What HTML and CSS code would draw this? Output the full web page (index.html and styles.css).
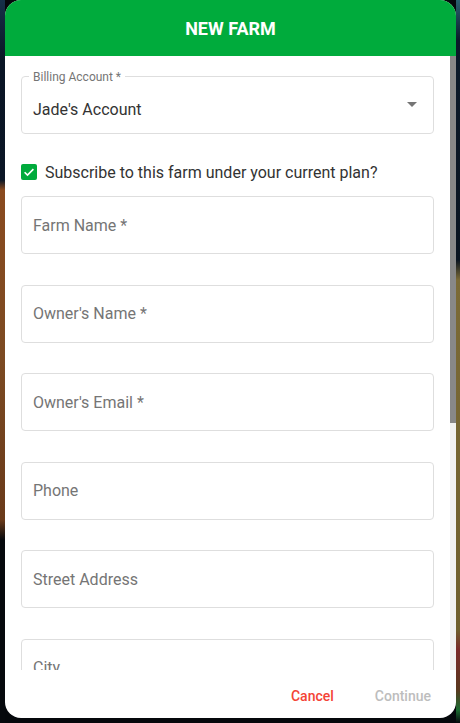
FILE: index.html
```html
<!DOCTYPE html>
<html>
<head>
    <title>New Farm</title>
    <link rel="stylesheet" href="styles.css">
</head>
<body>
    <div class="dialog">
        <div class="dialog-title">NEW FARM</div>
        <div class="dialog-body">
            <div class="dialog-content">
                <div class="field select-field">
                    <span class="field-label">Billing Account *</span>
                    <span class="field-value">Jade's Account</span>
                    <svg class="select-arrow" width="24" height="24" viewBox="0 0 24 24"><path d="M7 10l5 5 5-5z" fill="#757575"/></svg>
                </div>
                <label class="check-row">
                    <span class="checkbox">
                        <svg width="16" height="16" viewBox="0 0 16 16"><path d="M3.6 8.2l2.9 2.9 5.9-6" fill="none" stroke="#fff" stroke-width="1.6"/></svg>
                    </span>
                    Subscribe to this farm under your current plan?
                </label>
                <div class="field"><span class="placeholder">Farm Name *</span></div>
                <div class="field"><span class="placeholder">Owner's Name *</span></div>
                <div class="field"><span class="placeholder">Owner's Email *</span></div>
                <div class="field"><span class="placeholder">Phone</span></div>
                <div class="field"><span class="placeholder">Street Address</span></div>
                <div class="field"><span class="placeholder">City</span></div>
                <div class="field"><span class="placeholder">State</span></div>
                <div class="field"><span class="placeholder">Zip Code</span></div>
                <div class="field"><span class="placeholder">Country</span></div>
            </div>
            <div class="scroll-track"><div class="scroll-thumb"></div></div>
        </div>
        <div class="dialog-actions">
            <button class="btn btn-cancel">Cancel</button>
            <button class="btn btn-continue" disabled>Continue</button>
        </div>
    </div>
</body>
</html>
```

FILE: styles.css
```css
html, body { height: 100%; }
body {
    margin: 0;
    font-family: Roboto, "Liberation Sans", sans-serif;
    background:
        linear-gradient(#163049 0, #0a1525 60px, #0b1626 180px, #8a4a1f 190px, #7c4a22 360px, #6a3a1a 520px, #06090d 540px) left top / 5px 100% no-repeat,
        linear-gradient(#2b6070 0, #0b1a2a 40px, #0a1420 260px, #7b6a36 280px, #6f5f2e 630px, #7a2a2a 650px, #5a3a20 690px, #1a6a30 710px, #05080c 723px) right top / 4px 100% no-repeat,
        #05080c;
}
.dialog {
    margin-left: 5px;
    width: 451px;
    height: 718px;
    background: #fff;
    border-radius: 16px;
    overflow: hidden;
    display: flex;
    flex-direction: column;
}
.dialog-title {
    height: 56px;
    flex: none;
    background: #00ab3c;
    color: #fff;
    font-size: 18px;
    font-weight: 700;
    display: flex;
    align-items: center;
    justify-content: center;
}
.dialog-body {
    flex: 1;
    min-height: 0;
    position: relative;
}
.dialog-content {
    height: 100%;
    box-sizing: border-box;
    overflow: hidden;
    padding: 20px 22px 32px 16px;
}
/* scrollbar drawn over the right edge of the content */
.scroll-track {
    position: absolute;
    top: 0;
    right: 0;
    bottom: 0;
    width: 6px;
    background: #f1f1f1;
}
.scroll-thumb {
    height: 367px;
    background: #888;
}

.field {
    position: relative;
    box-sizing: border-box;
    height: 58px;
    border: 1px solid #dedede;
    border-radius: 4px;
    display: flex;
    align-items: center;
    padding: 0 11px;
    margin-bottom: 30.5px;
    font-size: 16px;
}
.placeholder { color: #757575; }
.select-field { margin-bottom: 0; padding-top: 8px; }
.field-label {
    position: absolute;
    left: 7px;
    top: -7px;
    padding: 0 4px;
    background: #fff;
    font-size: 12px;
    color: #757575;
}
.field-value { color: #333; }
.select-arrow {
    position: absolute;
    right: 9px;
    top: 15px;
}
.check-row {
    display: flex;
    align-items: center;
    gap: 8px;
    height: 24px;
    margin: 26px 0 12px;
    font-size: 16px;
    color: #333;
}
.checkbox {
    width: 16px;
    height: 16px;
    border-radius: 2px;
    background: #00ab3c;
    display: flex;
}
.dialog-actions {
    height: 48px;
    flex: none;
    display: flex;
    align-items: center;
    justify-content: flex-end;
    gap: 41px;
    padding: 4px 25px 0 0;
    box-sizing: border-box;
}
.btn {
    background: none;
    border: none;
    padding: 0;
    font-family: inherit;
    font-size: 14px;
    font-weight: 500;
}
.btn-cancel { color: #f44336; }
.btn-continue { color: #bdbdbd; }
```
